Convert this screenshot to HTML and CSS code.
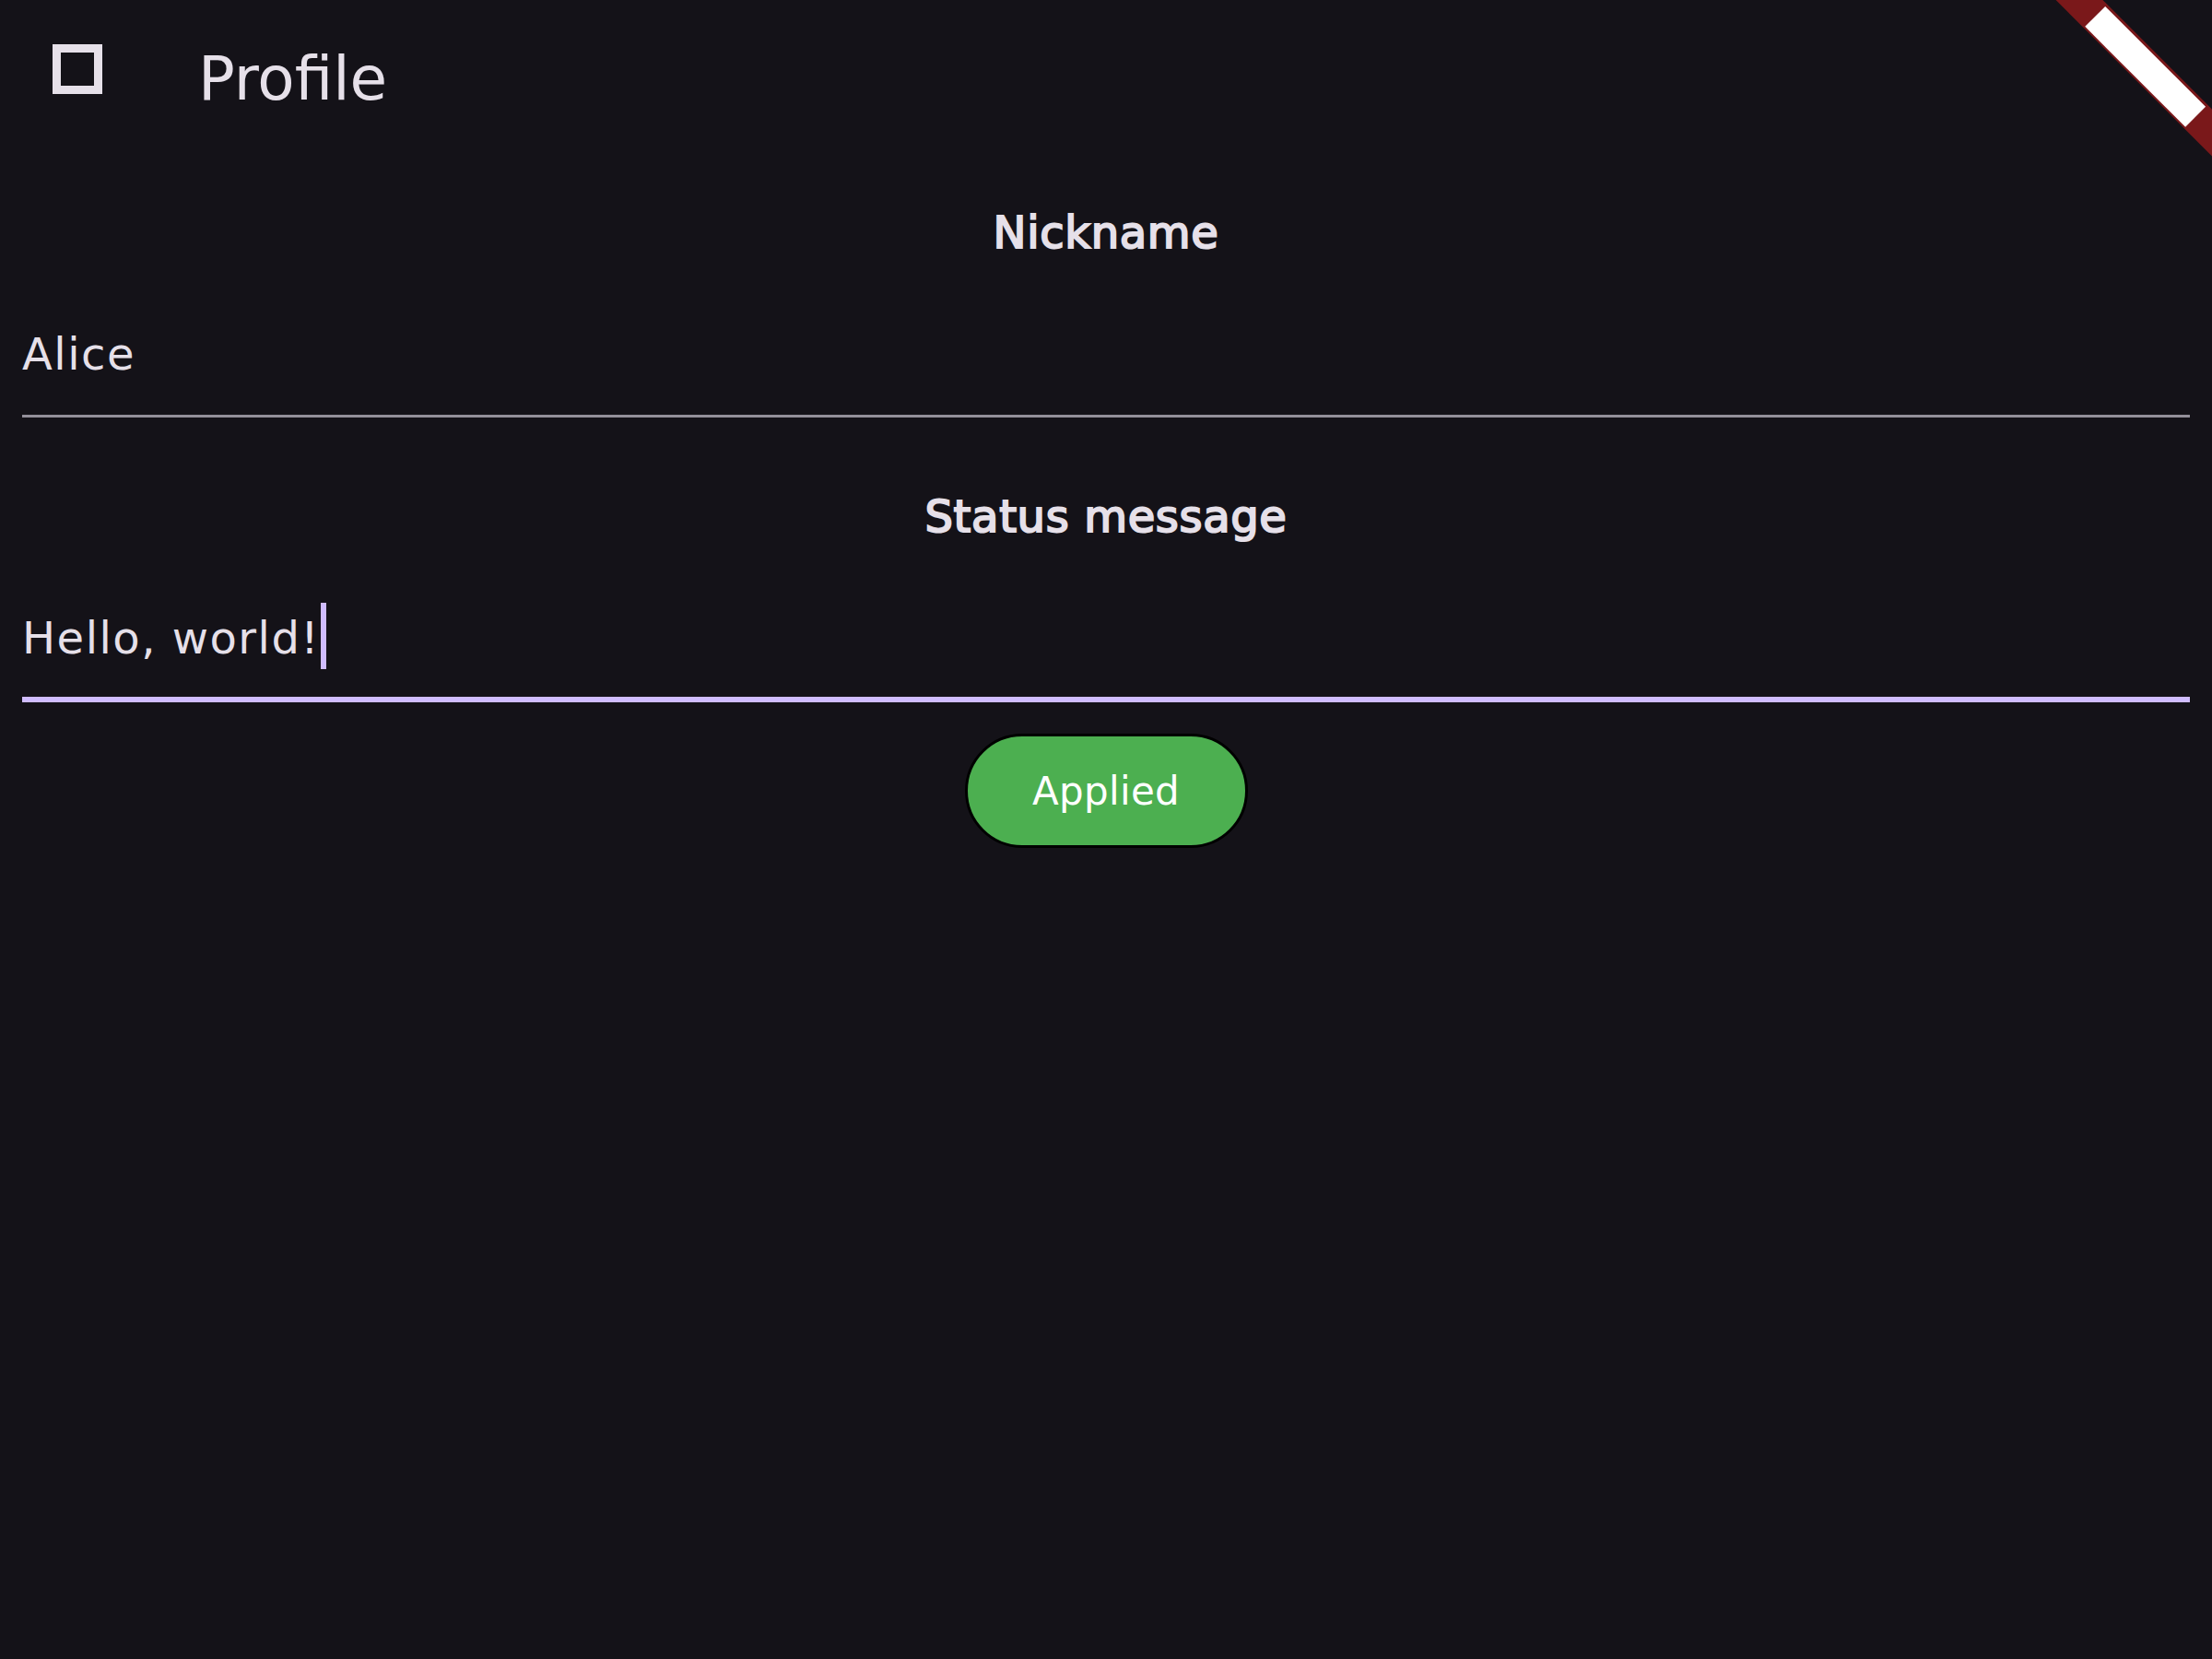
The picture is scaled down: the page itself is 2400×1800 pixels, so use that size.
FILE: index.html
```html
<!DOCTYPE html>
<html lang="en">
<head>
<meta charset="utf-8">
<title>Profile</title>
<link rel="stylesheet" href="styles.css">
</head>
<body>
<header class="appbar">
  <div class="app-icon"></div>
  <h1 class="app-title">Profile</h1>
</header>
<main class="content">
  <section class="section">
    <div class="label">Nickname</div>
    <div class="field">Alice</div>
  </section>
  <section class="section section-second">
    <div class="label">Status message</div>
    <div class="field field-focused">Hello, world!<span class="cursor"></span></div>
  </section>
  <button class="applied-btn">Applied</button>
</main>
<div class="debug-banner">
  <div class="debug-band"><div class="debug-text"></div></div>
</div>
</body>
</html>
```
FILE: styles.css
```css
html, body {
  margin: 0;
  padding: 0;
}
body {
  background: #141218;
  color: #E6E0E9;
  font-family: "DejaVu Sans", "Liberation Sans", sans-serif;
  width: 2400px;
  height: 1800px;
  overflow: hidden;
  position: relative;
}
.appbar {
  height: 192px;
  display: flex;
  align-items: flex-start;
}
.app-icon {
  box-sizing: border-box;
  width: 54px;
  height: 54px;
  margin: 48px 0 0 57px;
  border: 9px solid #E6E0E9;
}
.app-title {
  margin: 46px 0 0 104px;
  font-size: 66px;
  line-height: 80px;
  font-weight: normal;
  color: #E6E0E9;
}
.content {
  padding: 24px 24px 0;
  display: flex;
  flex-direction: column;
}
.section {
  display: flex;
  flex-direction: column;
}
.section-second {
  margin-top: 71px;
}
.label {
  text-align: center;
  font-size: 48px;
  line-height: 72px;
  letter-spacing: 0.65px;
  -webkit-text-stroke: 2px #E6E0E9;
  color: #E6E0E9;
}
.field {
  margin-top: 60px;
  font-size: 48px;
  line-height: 72px;
  letter-spacing: 1.5px;
  padding-bottom: 30px;
  border-bottom: 3px solid #938F99;
  color: #E6E0E9;
  white-space: pre;
}
.field-focused {
  padding-bottom: 28px;
  border-bottom: 6px solid #D0BCFF;
}
.cursor {
  display: inline-block;
  width: 6px;
  height: 72px;
  margin-left: 1px;
  vertical-align: top;
  background: #D0BCFF;
  transform: translateY(-2px);
}
.applied-btn {
  box-sizing: border-box;
  margin: 34px auto 0;
  width: 307px;
  height: 124px;
  border: 3px solid #000;
  border-radius: 62px;
  background: #4CAF50;
  color: #FFFFFF;
  font-family: "DejaVu Sans", "Liberation Sans", sans-serif;
  font-size: 42px;
  letter-spacing: 0.3px;
  padding: 0;
  display: flex;
  align-items: center;
  justify-content: center;
}
.debug-banner {
  position: absolute;
  top: 0;
  right: 0;
  width: 200px;
  height: 200px;
  overflow: hidden;
  pointer-events: none;
}
.debug-band {
  position: absolute;
  left: -71.75px;
  top: 53.75px;
  width: 400px;
  height: 36px;
  background: #7A181A;
  transform: rotate(45deg);
  display: flex;
  align-items: center;
  justify-content: center;
}
.debug-text {
  width: 154px;
  height: 31px;
  background: #FFFFFF;
}
```
